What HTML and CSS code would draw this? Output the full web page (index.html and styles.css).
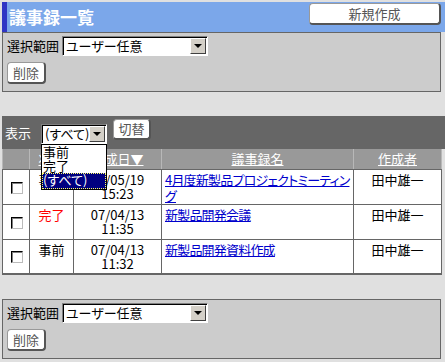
FILE: index.html
```html
<!DOCTYPE html>
<html lang="ja">
<head>
    <meta charset="UTF-8">
    <title>議事録一覧</title>
    <link rel="stylesheet" href="styles.css">
</head>
<body>
    <!-- Title bar -->
    <div class="title-bar">
        <h1 class="title">議事録一覧</h1>
        <button class="btn btn-new">新規作成</button>
    </div>

    <!-- Range panel (top) -->
    <div class="panel">
        <div class="panel-row">
            <span class="label">選択範囲</span>
            <div class="select select-range">
                <span class="select-text">ユーザー任意</span>
                <span class="select-arrow"></span>
            </div>
        </div>
        <button class="btn btn-small">削除</button>
    </div>

    <!-- Filter bar -->
    <div class="list-bar">
        <span class="label">表示</span>
        <div class="select select-filter">
            <span class="select-text">(すべて)</span>
            <span class="select-arrow"></span>
            <ul class="select-menu">
                <li>事前</li>
                <li>完了</li>
                <li class="selected">(すべて)</li>
            </ul>
        </div>
        <button class="btn btn-switch">切替</button>
    </div>

    <!-- Minutes list -->
    <table class="list">
        <colgroup>
            <col class="col-check">
            <col class="col-status">
            <col class="col-date">
            <col class="col-name">
            <col class="col-author">
        </colgroup>
        <thead>
            <tr>
                <th></th>
                <th><a href="#">状態</a></th>
                <th><a href="#">作成日▼</a></th>
                <th><a href="#">議事録名</a></th>
                <th><a href="#">作成者</a></th>
            </tr>
        </thead>
        <tbody>
            <tr>
                <td class="check"><span class="checkbox"></span></td>
                <td class="center">事前</td>
                <td class="center">07/05/19<br>15:23</td>
                <td class="name"><a href="#">4月度新製品プロジェクトミーティング</a></td>
                <td class="center">田中雄一</td>
            </tr>
            <tr>
                <td class="check"><span class="checkbox"></span></td>
                <td class="center done">完了</td>
                <td class="center">07/04/13<br>11:35</td>
                <td class="name"><a href="#">新製品開発会議</a></td>
                <td class="center">田中雄一</td>
            </tr>
            <tr>
                <td class="check"><span class="checkbox"></span></td>
                <td class="center">事前</td>
                <td class="center">07/04/13<br>11:32</td>
                <td class="name"><a href="#">新製品開発資料作成</a></td>
                <td class="center">田中雄一</td>
            </tr>
        </tbody>
    </table>

    <!-- Range panel (bottom) -->
    <div class="panel panel-bottom">
        <div class="panel-row">
            <span class="label">選択範囲</span>
            <div class="select select-range">
                <span class="select-text">ユーザー任意</span>
                <span class="select-arrow"></span>
            </div>
        </div>
        <button class="btn btn-small">削除</button>
    </div>
</body>
</html>
```

FILE: styles.css
```css
/* Basic reset */
* {
    margin: 0;
    padding: 0;
    box-sizing: border-box;
}

body {
    font-family: "Noto Sans CJK JP", "Liberation Sans", sans-serif;
    font-size: 13px;
    line-height: 14px;
    font-feature-settings: "palt";
    background-color: #e0e0e0;
    color: #000;
    padding: 2px 0 0 2px;
    overflow: hidden;
}

/* Title bar */
.title-bar {
    height: 30px;
    background-color: #7ba7ea;
    border-left: 5px solid #2f35c4;
    display: flex;
    align-items: center;
    justify-content: space-between;
    padding: 0 4px 0 2px;
}

.title {
    color: #fff;
    font-size: 17px;
    font-weight: bold;
    line-height: 20px;
}

/* Buttons */
.btn {
    font-family: inherit;
    font-size: 13px;
    color: #555;
    background-color: #fff;
    border: 1px solid #999;
    border-right: 2px solid #555;
    border-bottom: 2px solid #555;
    border-radius: 4px;
    cursor: pointer;
    line-height: 16px;
}

.btn-new {
    width: 132px;
    height: 22px;
    margin-top: -6px;
}

.btn-small {
    width: 39px;
    height: 22px;
    margin-left: 3px;
}

.btn-switch {
    width: 38px;
    height: 21px;
    margin-left: 6px;
    margin-bottom: 6px;
}

/* Gray panels */
.panel {
    width: 439px;
    height: 60px;
    background-color: #ccc;
    border: 1px solid #666;
    padding: 3px 0 0 1px;
}

.panel-row {
    display: flex;
    align-items: center;
    margin-bottom: 6px;
}

.panel-row .label {
    margin: 0 3px 0 3px;
}

.panel-bottom {
    margin-top: 24px;
}

/* Fake select boxes */
.select {
    position: relative;
    height: 20px;
    background-color: #fff;
    border-top: 1px solid #808080;
    border-left: 1px solid #808080;
    border-right: 1px solid #fff;
    border-bottom: 1px solid #fff;
    box-shadow: inset 1px 1px 0 #000;
    display: flex;
    align-items: center;
    padding: 1px 1px 1px 3px;
}

.select-range {
    width: 146px;
}

.select-filter {
    width: 66px;
}

.select-text {
    flex: 1;
    white-space: nowrap;
}

.select-arrow {
    width: 16px;
    height: 16px;
    background-color: #d4d0c8;
    border-top: 1px solid #fff;
    border-left: 1px solid #fff;
    border-right: 1px solid #404040;
    border-bottom: 1px solid #404040;
    display: flex;
    align-items: center;
    justify-content: center;
}

.select-arrow::after {
    content: "";
    border-top: 4px solid #000;
    border-left: 4px solid transparent;
    border-right: 4px solid transparent;
}

/* Open dropdown list */
.select-menu {
    position: absolute;
    top: 19px;
    left: -1px;
    width: 66px;
    background-color: #fff;
    border: 1px solid #000;
    list-style: none;
    z-index: 2;
}

.select-menu li {
    height: 14px;
    line-height: 14px;
    padding-left: 1px;
}

.select-menu li.selected {
    height: 16px;
    background-color: #000080;
    color: #fff;
    outline: 1px dotted #ffff66;
    outline-offset: -1px;
}

/* Filter bar */
.list-bar {
    height: 33px;
    margin-top: 24px;
    background-color: #666;
    color: #fff;
    display: flex;
    align-items: center;
    padding-left: 3px;
}

.list-bar .label {
    margin-right: 10px;
}

.list-bar .select {
    color: #000;
    margin-top: 2px;
}

/* Minutes table */
.list {
    width: 439px;
    border-collapse: collapse;
    table-layout: fixed;
    background-color: #fff;
    border-left: 1px solid #666;
    border-right: 1px solid #666;
    border-bottom: 2px solid #666;
}

.col-check { width: 27px; }
.col-status { width: 44px; }
.col-date { width: 88px; }
.col-name { width: 192px; }
.col-author { width: 88px; }

.list th {
    height: 20px;
    background-color: #999;
    font-weight: normal;
    border-left: 1px solid #b8b8b8;
    border-right: 1px solid #b8b8b8;
    border-bottom: 1px solid #666;
    text-align: center;
}

.list th a {
    color: #fff;
}

.list td {
    height: 35px;
    border: 1px solid #666;
    vertical-align: top;
    padding: 3px 3px 0 3px;
}

.list td.name {
    padding-right: 1px;
    line-height: 16px;
    padding-top: 2px;
}

.list td a {
    color: #0000cc;
    letter-spacing: -0.8px;
}

.list td.center {
    text-align: center;
}

.list td.done {
    color: #f00;
}

.list td.check {
    vertical-align: middle;
    padding: 2px 0 0 8px;
}

.checkbox {
    display: block;
    width: 12px;
    height: 12px;
    background-color: #fff;
    border-top: 1px solid #000;
    border-left: 1px solid #000;
    border-right: 1px solid #bbb;
    border-bottom: 1px solid #bbb;
    box-shadow: inset 1px 1px 0 #808080;
}
```
